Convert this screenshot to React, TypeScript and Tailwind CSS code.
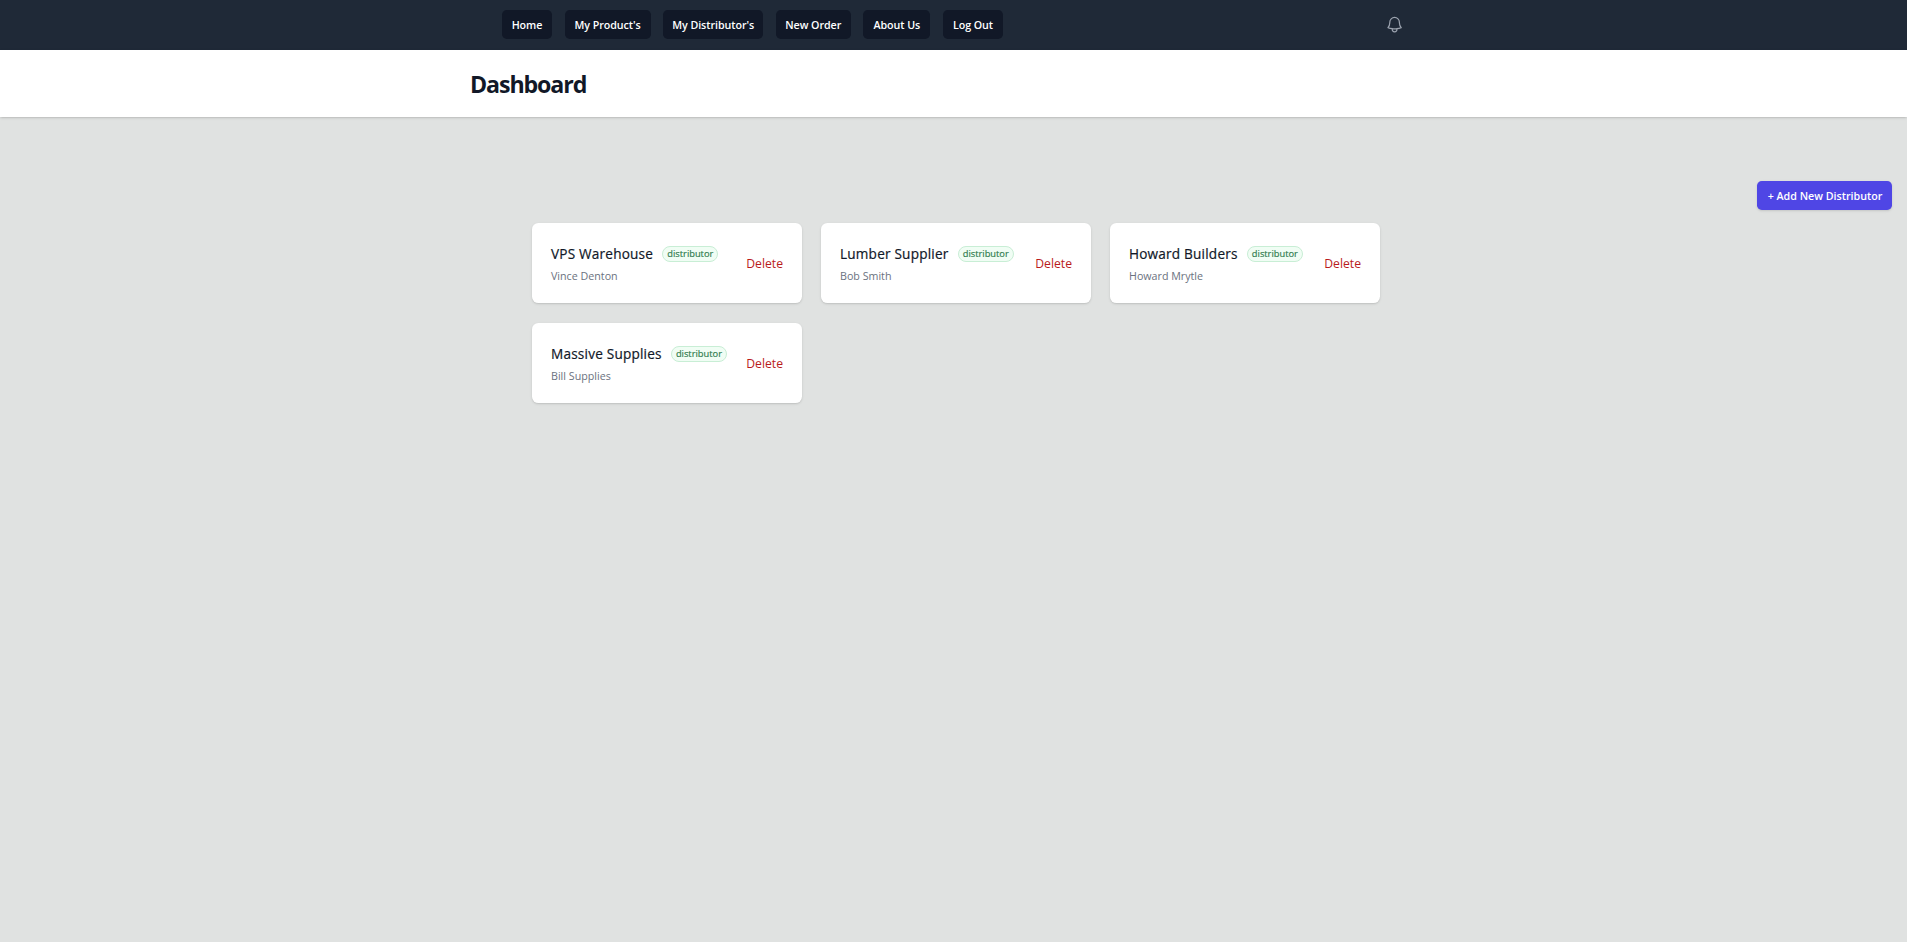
const navItems = [
  { label: "Home", size: "w-[50px]" },
  { label: "My Product's", size: "w-[86px]" },
  { label: "My Distributor's", size: "w-[100px]" },
  { label: "New Order", size: "w-[75px]" },
  { label: "About Us", size: "w-[67px]" },
  { label: "Log Out", size: "w-[60px]" },
];

const distributors = [
  { company: "VPS Warehouse", contact: "Vince Denton" },
  { company: "Lumber Supplier", contact: "Bob Smith" },
  { company: "Howard Builders", contact: "Howard Mrytle" },
  { company: "Massive Supplies", contact: "Bill Supplies" },
];

function Bell() {
  return (
    <svg className="size-[19.2px]" fill="none" viewBox="0 0 24 24" strokeWidth={1.5} stroke="currentColor" aria-hidden="true">
      <path
        strokeLinecap="round"
        strokeLinejoin="round"
        d="M14.857 17.082a23.848 23.848 0 005.454-1.31A8.967 8.967 0 0118 9.75v-.7V9A6 6 0 006 9v.75a8.967 8.967 0 01-2.312 6.022c1.733.64 3.56 1.085 5.455 1.31m5.714 0a24.255 24.255 0 01-5.714 0m5.714 0a3 3 0 11-5.714 0"
      />
    </svg>
  );
}

function DistributorCard({ company, contact }: { company: string; contact: string }) {
  return (
    <li className="flex h-20 items-center justify-between rounded-[6.4px] bg-white px-[19px] shadow-[0_1px_3px_rgba(0,0,0,0.1),0_1px_2px_-1px_rgba(0,0,0,0.2)]">
      <div className="pt-[2px]">
        <div className="flex items-center gap-[9.2px]">
          <h3 className="text-[13.6px] leading-5 font-medium tracking-[0.2px] whitespace-nowrap text-gray-900 [-webkit-text-stroke:0.2px_#111827]">{company}</h3>
          <span className="flex h-4 w-14 items-center justify-center rounded-full border border-[#c8eed5] bg-[#f0fdf4] text-[9.3px] font-medium text-[#2c7a4b] [-webkit-text-stroke:0.15px_#2c7a4b]">
            distributor
          </span>
        </div>
        <p className="mt-1 text-[10.7px] leading-4 text-[#6b7280]">{contact}</p>
      </div>
      <button className="pt-[2px] text-[12.2px] leading-5 text-[#b91c1c]">Delete</button>
    </li>
  );
}

export default function App() {
  return (
    <div className="min-h-screen bg-[#e0e2e1] font-['Open_Sans','Noto_Sans',sans-serif]">
      <nav className="h-[50px] bg-[#1f2937] pt-[10px]">
        <div className="mx-auto flex w-[903px] justify-between">
          <div className="flex gap-[12.6px]">
            {navItems.map((item) => (
              <a
                key={item.label}
                href="#"
                className={`${item.size} flex h-[29px] items-center justify-center rounded-[4.8px] bg-[#111827] pt-px text-[10.7px] font-semibold tracking-[-0.05px] whitespace-nowrap text-white`}
              >
                {item.label}
              </a>
            ))}
          </div>
          <button className="mt-[5px] mr-px h-[19.2px] text-[#9ca3af]">
            <Bell />
          </button>
        </div>
      </nav>
      <header className="h-[67px] bg-white pt-[20px] shadow-[0_1px_3px_rgba(0,0,0,0.1),0_1px_2px_-1px_rgba(0,0,0,0.2)]">
        <div className="mx-auto w-[967px]">
          <h1 className="text-[23.2px] leading-[29px] font-bold tracking-[-1.1px] text-[#111827]">Dashboard</h1>
        </div>
      </header>
      <main className="pt-16">
        <div className="flex justify-end pr-[15px]">
          <button className="h-[29px] w-[135px] rounded-[4.8px] bg-[#4f46e5] pt-px pl-px text-[10.7px] font-semibold whitespace-nowrap text-white shadow-sm">
            + Add New Distributor
          </button>
        </div>
        <ul className="mx-auto mt-[13px] grid w-[853px] grid-cols-3 gap-x-[19px] gap-y-5 pl-[5px]">
          {distributors.map((d) => (
            <DistributorCard key={d.company} {...d} />
          ))}
        </ul>
      </main>
    </div>
  );
}
